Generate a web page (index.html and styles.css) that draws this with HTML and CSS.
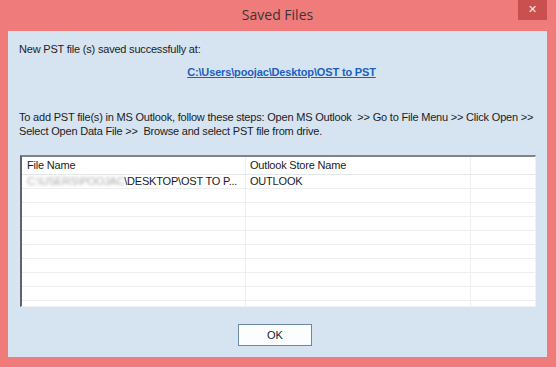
FILE: index.html
```html
<!DOCTYPE html>
<html lang="en">
<head>
    <meta charset="UTF-8">
    <title>Saved Files</title>
    <link rel="stylesheet" href="styles.css">
</head>
<body>
    <div class="window">
        <div class="titlebar">
            <span></span>
            <div class="title">Saved Files</div>
            <button class="close">&#x2715;</button>
        </div>
        <div class="panel">
            <p class="saved">New PST file (s) saved successfully at:</p>
            <p class="path"><a href="#">C:\Users\poojac\Desktop\OST to PST</a></p>
            <p class="steps">To add PST file(s) in MS Outlook, follow these steps: Open MS Outlook &nbsp;&gt;&gt; Go to File Menu &gt;&gt; Click Open &gt;&gt;<br>Select Open Data File &gt;&gt; &nbsp;Browse and select PST file from drive.</p>

            <div class="list">
                <div class="row head">
                    <div class="cell">File Name</div>
                    <div class="cell">Outlook Store Name</div>
                    <div class="cell"></div>
                </div>
                <div class="row">
                    <div class="cell"><span class="blur">C:\USERS\POOJAC</span>\DESKTOP\OST TO P...</div>
                    <div class="cell">OUTLOOK</div>
                    <div class="cell"></div>
                </div>
                <div class="row"><div class="cell"></div><div class="cell"></div><div class="cell"></div></div>
                <div class="row"><div class="cell"></div><div class="cell"></div><div class="cell"></div></div>
                <div class="row"><div class="cell"></div><div class="cell"></div><div class="cell"></div></div>
                <div class="row"><div class="cell"></div><div class="cell"></div><div class="cell"></div></div>
                <div class="row"><div class="cell"></div><div class="cell"></div><div class="cell"></div></div>
                <div class="row"><div class="cell"></div><div class="cell"></div><div class="cell"></div></div>
                <div class="row"><div class="cell"></div><div class="cell"></div><div class="cell"></div></div>
                <div class="row"><div class="cell"></div><div class="cell"></div><div class="cell"></div></div>
                <div class="row last"><div class="cell"></div><div class="cell"></div><div class="cell"></div></div>
            </div>

            <div class="actions">
                <button class="ok">OK</button>
            </div>
        </div>
    </div>
</body>
</html>
```

FILE: styles.css
```css
* {
    box-sizing: border-box;
}

body {
    margin: 0;
    width: 556px;
    height: 367px;
    overflow: hidden;
    font-family: 'Liberation Sans', Arial, sans-serif;
    font-size: 11px;
    letter-spacing: -0.2px;
    color: #1b1b1b;
}

.window {
    width: 556px;
    height: 367px;
    background-color: #ef7c7b;
    padding: 0 9px 10px 8px;
    display: flex;
    flex-direction: column;
}

.titlebar {
    height: 31px;
    display: grid;
    grid-template-columns: 1fr auto 1fr;
    align-items: start;
}

.title {
    font-family: 'Open Sans', 'Noto Sans', sans-serif;
    font-size: 14px;
    letter-spacing: 0;
    line-height: 30px;
    color: #3f3333;
}

.close {
    justify-self: end;
    width: 29px;
    height: 20px;
    border: none;
    padding: 0;
    background-color: #c9504f;
    color: #f6e3e3;
    font-family: 'DejaVu Sans', sans-serif;
    font-size: 11px;
    font-weight: bold;
    line-height: 20px;
}

.panel {
    flex: 1;
    background-color: #d6e4f2;
    padding: 11px 11px 0 11px;
    display: flex;
    flex-direction: column;
}

.panel p {
    margin: 0;
    line-height: 14px;
}

.path {
    margin-top: 9px !important;
    text-align: center;
    padding-left: 8px;
}

.path a {
    color: #1b5fbf;
    font-weight: bold;
    letter-spacing: -0.15px;
    text-decoration: underline;
}

.steps {
    margin-top: 31px !important;
    white-space: nowrap;
}

.list {
    margin: 17px 0 0 1px;
    height: 152px;
    background-color: #fff;
    border-style: solid;
    border-width: 2px 1px 1px 2px;
    border-color: #7c858e #eef2f6 #eef2f6 #5f6368;
    overflow: hidden;
}

.row {
    display: grid;
    grid-template-columns: 224px 225px 1fr;
    height: 14px;
    border-bottom: 1px solid #eceeef;
}

.row.head {
    height: 18px;
    border-bottom-color: #e4e7ea;
}

.cell {
    border-right: 1px solid #eceeef;
    padding-left: 5px;
    line-height: 13px;
    white-space: nowrap;
    overflow: hidden;
}

.row.head .cell {
    line-height: 17px;
}

.cell:nth-child(2) {
    padding-left: 4px;
}

.cell:last-child {
    border-right: none;
}

.blur {
    color: #a9a9a9;
    filter: blur(1.4px);
}

.actions {
    margin-top: 17px;
    display: flex;
    justify-content: center;
    padding-right: 5px;
}

.ok {
    width: 74px;
    height: 22px;
    background-color: #fcfdfe;
    border: 1px solid #6a8aa4;
    font-family: 'Liberation Sans', Arial, sans-serif;
    font-size: 11px;
    color: #1b1b1b;
    padding: 0;
}
```
